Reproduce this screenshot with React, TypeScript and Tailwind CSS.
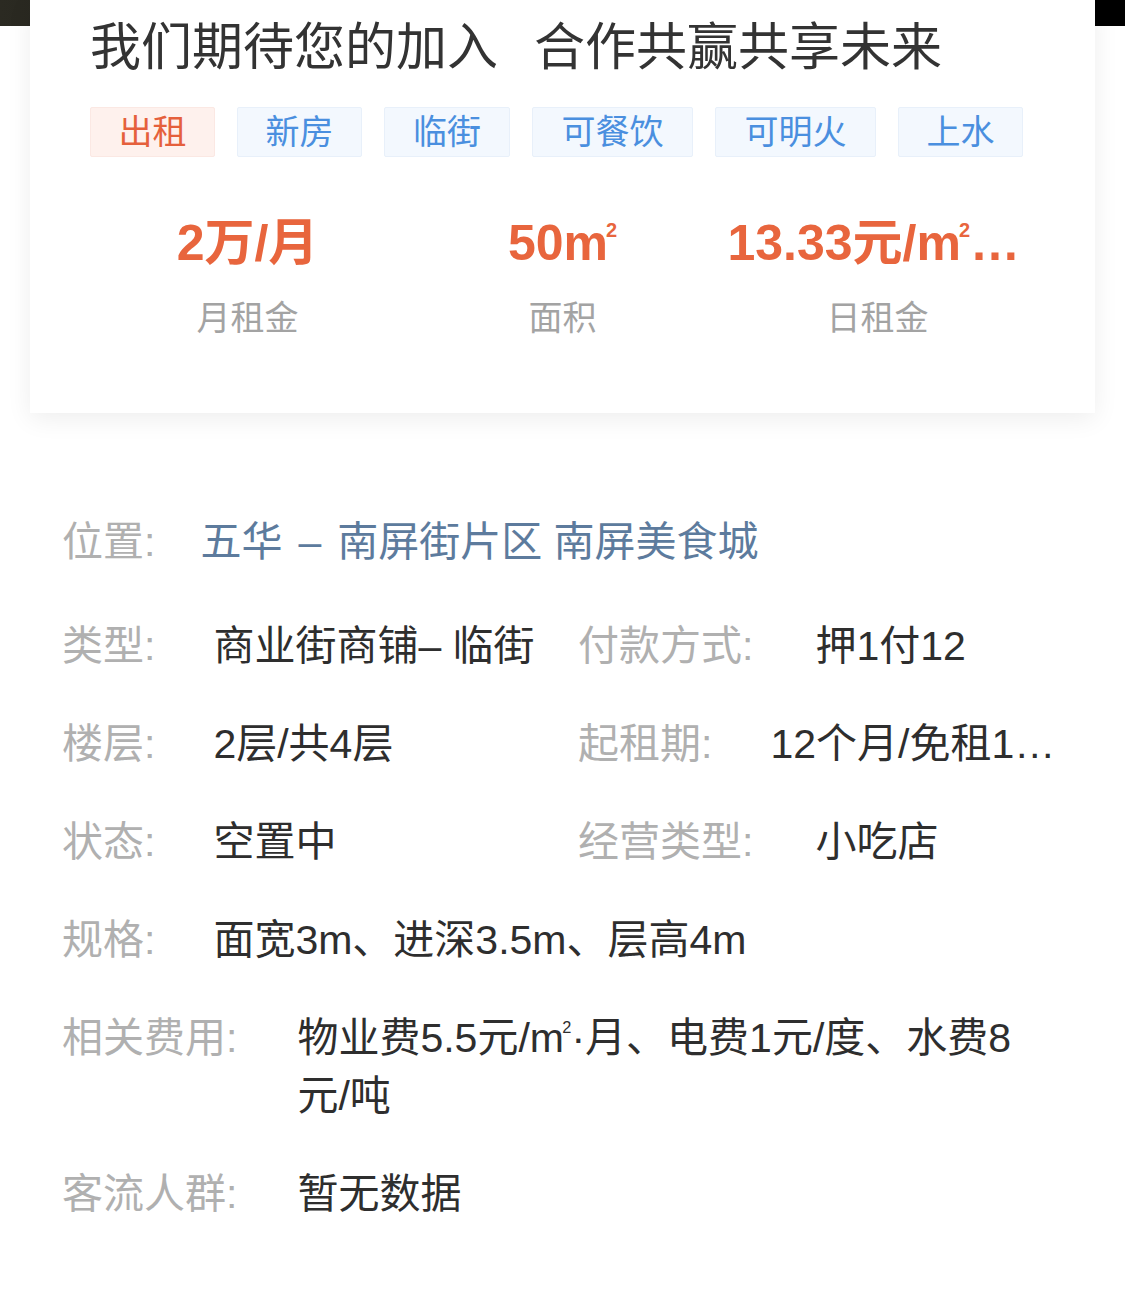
import React from 'react';

const tags = [
    { text: '出租', hot: true, w: 'w-[125px]' },
    { text: '新房', hot: false, w: 'w-[125px]' },
    { text: '临街', hot: false, w: 'w-[126px]' },
    { text: '可餐饮', hot: false, w: 'w-[161px]' },
    { text: '可明火', hot: false, w: 'w-[161px]' },
    { text: '上水', hot: false, w: 'w-[125px]' },
];

// m² drawn as m with a small raised 2
function M2() {
    return (
        <span>
            m<span className="relative -top-[1.15em] -ml-[0.1em] text-[0.4em] leading-none">2</span>
        </span>
    );
}

function Cell({ label, value, gap = 'ml-[58px]', className = '' }: any) {
    return (
        <div className={`flex min-w-0 items-start ${className}`}>
            <span className="shrink-0 text-[#b0b0b0]">{label}</span>
            <span className={`${gap} min-w-0 truncate text-[#2e2e2e]`}>{value}</span>
        </div>
    );
}

export default function App() {
    return (
        <div
            className="min-h-[1293px] w-[1125px] bg-white"
            style={{ fontFamily: '"Liberation Sans", "Noto Sans CJK SC", sans-serif' }}
        >
            <div className="h-[26px] w-full bg-gradient-to-r from-[#2b2a22] via-[#0d0d0b] to-black"></div>

            {/* top card */}
            <div className="relative z-10 mx-[30px] -mt-[26px] bg-white px-[60px] pt-[17px] pb-[73px] shadow-[0_6px_24px_rgba(0,0,0,0.07)]">
                <h1 className="text-[51px] leading-[62px] font-normal text-[#333]">
                    我们期待您的加入<span className="ml-[36px]">合作共赢共享未来</span>
                </h1>

                <div className="mt-[28px] flex gap-[22px]">
                    {tags.map((t) => (
                        <div
                            key={t.text}
                            className={`${t.w} flex h-[50px] items-center justify-center rounded-[2px] border text-[34px] ${
                                t.hot ? 'border-[#fbe8e3] bg-[#fef1ed] text-[#e5603c]' : 'border-[#e8f0fa] bg-[#f3f8fe] text-[#4a8fdf]'
                            }`}
                        >
                            {t.text}
                        </div>
                    ))}
                </div>

                <div className="mt-[54px] grid grid-cols-3">
                    <div className="flex flex-col items-center">
                        <div className="h-[64px] text-[50px] leading-[64px] font-semibold text-[#e8653d]">2万/月</div>
                        <div className="mt-[21px] text-[34px] leading-[44px] text-[#a3a3a3]">月租金</div>
                    </div>
                    <div className="flex flex-col items-center">
                        <div className="h-[64px] text-[50px] leading-[64px] font-semibold text-[#e8653d]">
                            50
                            <M2 />
                        </div>
                        <div className="mt-[21px] text-[34px] leading-[44px] text-[#a3a3a3]">面积</div>
                    </div>
                    <div className="flex min-w-0 flex-col items-center">
                        <div className="h-[64px] max-w-[300px] truncate text-[50px] leading-[64px] font-semibold text-[#e8653d]">
                            13.33元/
                            <M2 />
                            /天
                        </div>
                        <div className="mt-[21px] text-[34px] leading-[44px] text-[#a3a3a3]">日租金</div>
                    </div>
                </div>
            </div>

            {/* details */}
            <div className="mt-[100px] flex flex-col pr-[62px] pl-[62px] text-[41px] leading-[58px]">
                <div className="flex">
                    <span className="shrink-0 text-[#b0b0b0]">位置:</span>
                    <span className="ml-[45px] text-[#5d7b9d]">
                        五华<span className="mx-[16px]">–</span>南屏街片区 南屏美食城
                    </span>
                </div>

                <div className="mt-[46px] flex flex-col gap-[40px]">
                    <div className="grid grid-cols-[516px_1fr]">
                        <Cell label="类型:" value="商业街商铺– 临街" />
                        <Cell label="付款方式:" value="押1付12" gap="ml-[62px]" />
                    </div>

                    <div className="grid grid-cols-[516px_1fr]">
                        <Cell label="楼层:" value="2层/共4层" />
                        <Cell label="起租期:" value="12个月/免租1个月" />
                    </div>

                    <div className="grid grid-cols-[516px_1fr]">
                        <Cell label="状态:" value="空置中" />
                        <Cell label="经营类型:" value="小吃店" gap="ml-[62px]" />
                    </div>

                    <Cell label="规格:" value="面宽3m、进深3.5m、层高4m" />

                    <div className="flex">
                        <span className="shrink-0 text-[#b0b0b0]">相关费用:</span>
                        <span className="ml-[60px] text-[#2e2e2e]">
                            物业费5.5元/
                            <M2 />
                            ·月、电费1元/度、水费8元/吨
                        </span>
                    </div>

                    <Cell label="客流人群:" value="暂无数据" gap="ml-[60px]" />
                </div>
            </div>
        </div>
    );
}
